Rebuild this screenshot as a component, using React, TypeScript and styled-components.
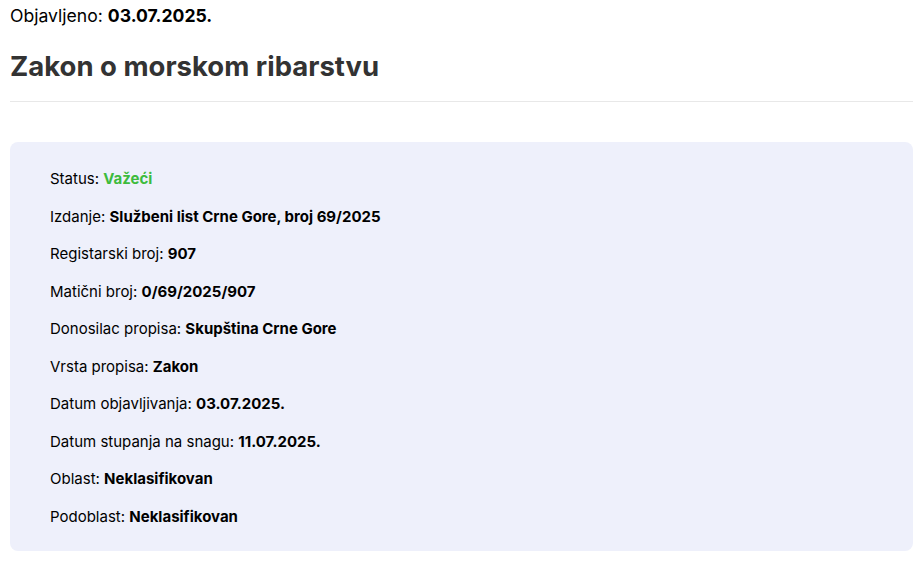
import React from "react";
import styled, { createGlobalStyle } from "styled-components";

const GlobalStyle = createGlobalStyle`
  body {
    margin: 0;
    background: #fff;
    font-family: Inter, "Liberation Sans", sans-serif;
    color: #000;
  }
`;

const Page = styled.div`
  padding: 4px 9px 20px 10px;
`;

const Published = styled.div`
  font-size: 17.6px;
  line-height: 24px;
`;

const Title = styled.h1`
  margin: 21px 0 0;
  font-size: 27.5px;
  line-height: 34px;
  font-weight: 700;
  color: #333;
  padding-bottom: 18px;
  border-bottom: 1px solid #e8e8e8;
`;

const Card = styled.div`
  margin-top: 40px;
  background: #eef0fb;
  border-radius: 8px;
  padding: 26px 40px 23px;
  display: flex;
  flex-direction: column;
  gap: 15px;
`;

const Row = styled.div`
  font-size: 15px;
  line-height: 22.5px;
`;

const Value = styled.strong<{ $color?: string }>`
  font-weight: 700;
  color: ${(p) => p.$color || "#000"};
`;

const rows: { label: string; value: string; color?: string }[] = [
  { label: "Status", value: "Važeći", color: "#3dbb3d" },
  { label: "Izdanje", value: "Službeni list Crne Gore, broj 69/2025" },
  { label: "Registarski broj", value: "907" },
  { label: "Matični broj", value: "0/69/2025/907" },
  { label: "Donosilac propisa", value: "Skupština Crne Gore" },
  { label: "Vrsta propisa", value: "Zakon" },
  { label: "Datum objavljivanja", value: "03.07.2025." },
  { label: "Datum stupanja na snagu", value: "11.07.2025." },
  { label: "Oblast", value: "Neklasifikovan" },
  { label: "Podoblast", value: "Neklasifikovan" },
];

export default function App() {
  return (
    <>
      <GlobalStyle />
      <Page>
        <Published>
          Objavljeno: <Value>03.07.2025.</Value>
        </Published>
        <Title>Zakon o morskom ribarstvu</Title>
        <Card>
          {rows.map((r) => (
            <Row key={r.label}>
              {r.label}: <Value $color={r.color}>{r.value}</Value>
            </Row>
          ))}
        </Card>
      </Page>
    </>
  );
}
